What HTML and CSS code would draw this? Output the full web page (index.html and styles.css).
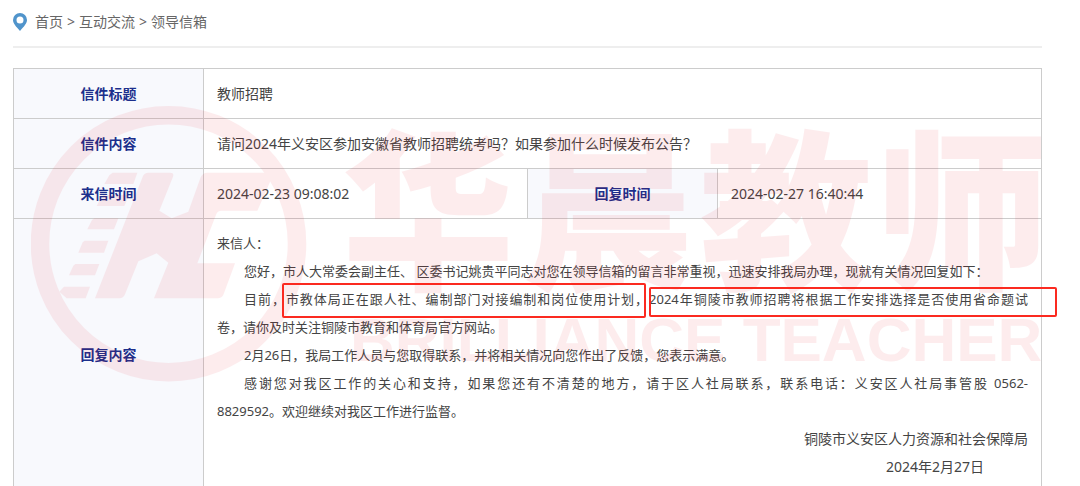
FILE: index.html
```
<!DOCTYPE html>
<html lang="zh-CN">
<head>
  <meta charset="UTF-8">
  <title>领导信箱</title>
  <link rel="stylesheet" href="styles.css">
</head>
<body>
  <nav class="breadcrumb">
    <svg class="pin" viewBox="0 0 14 18" width="14" height="18">
      <path fill="#5094cb" fill-rule="evenodd" d="M7 0a7 7 0 0 1 7 7c0 3.600-3 6.400-7 11C3 13.400 0 10.600 0 7a7 7 0 0 1 7-7zm0 3.500a3.500 3.500 0 1 0 0 7 3.500 3.500 0 0 0 0-7z"/>
    </svg>
    <a href="#">首页</a>
    <span>&gt;</span>
    <a href="#">互动交流</a>
    <span>&gt;</span>
    <a href="#">领导信箱</a>
  </nav>

  <main class="letter">
    <table>
      <colgroup>
        <col class="col-label">
        <col>
        <col class="col-label">
        <col>
      </colgroup>
      <tbody>
        <tr>
          <th scope="row">信件标题</th>
          <td colspan="3">教师招聘</td>
        </tr>
        <tr>
          <th scope="row">信件内容</th>
          <td colspan="3">请问2024年义安区参加安徽省教师招聘统考吗？如果参加什么时候发布公告？</td>
        </tr>
        <tr>
          <th scope="row">来信时间</th>
          <td>2024-02-23 09:08:02</td>
          <th scope="row">回复时间</th>
          <td>2024-02-27 16:40:44</td>
        </tr>
        <tr>
          <th scope="row">回复内容</th>
          <td colspan="3" class="reply">
            <p>来信人：</p>
            <p class="indent">您好，市人大常委会副主任、 区委书记姚贵平同志对您在领导信箱的留言非常重视，迅速安排我局办理，现就有关情况回复如下：</p>
            <p class="indent full">目前，<span class="frame frame-a">市教体局正在跟人社、编制部门对接编制和岗位使用计划，</span><span class="frame frame-b">2024年铜陵市教师招聘将根据工作安排选择是否使用省命题试</span></p>
            <p>卷，请你及时关注铜陵市教育和体育局官方网站。</p>
            <p class="indent">2月26日，我局工作人员与您取得联系，并将相关情况向您作出了反馈，您表示满意。</p>
            <p class="indent full">感谢您对我区工作的关心和支持，如果您还有不清楚的地方，请于区人社局联系，联系电话：义安区人社局事管股 0562-</p>
            <p>8829592。欢迎继续对我区工作进行监督。</p>
            <p class="sign">铜陵市义安区人力资源和社会保障局</p>
            <p class="sign date">2024年2月27日</p>
          </td>
        </tr>
      </tbody>
    </table>

    <!-- Watermark -->
    <svg class="watermark" viewBox="31 104 1012 280" width="1012" height="280" aria-hidden="true">
      <circle cx="168.500" cy="243.700" r="128.500" fill="none" stroke="#e60012" stroke-width="18.500"/>
      <g transform="translate(0 90) scale(.33333)">
        <path d="M446 248h64q13 0 9 12l-41 102 37 23 50-20 37-103q6-14 20-14h200l-50 114H664q-12 0-16 12l-56 146h113l-34 92q-5 13-19 13H462l43-107-35-28-55 24-40 99q-5 12-17 12h-73l142-362q4-15 19-15z"/>
        <path d="M338 248h74l-12 34h-87l15-26zM310 315h77l-14 33h-83l14-27zM283 385h72l-13 33h-80l14-28zM254 452h71l-13 36h-77l13-31zM226 522h72l-13 34h-78l13-29zM192 590h78l-13 35h-57l-22-20z"/>
      </g>
      <g class="wm-name">
        <text x="342" y="276">华</text>
        <text x="523" y="276">晨</text>
        <text x="700" y="276">教</text>
        <text x="876" y="276">师</text>
      </g>
      <text class="wm-latin" x="350" y="361">BRILLIANCE TEACHER</text>
    </svg>
  </main>
</body>
</html>
```
FILE: styles.css
```
* {
  box-sizing: border-box;
}
body {
  margin: 0;
  padding: 0 38px 0 13px;
  background: #fff;
  color: #444;
  font-family: "Noto Sans", "Noto Sans CJK SC", sans-serif;
  font-size: 14px;
  line-height: 28px;
}
.breadcrumb {
  display: flex;
  align-items: center;
  gap: 4px;
  height: 48px;
  padding-bottom: 2px;
  border-bottom: 2px solid #eee;
  color: #666;
}
.breadcrumb a {
  color: #666;
  text-decoration: none;
}
.pin {
  margin-right: 4px;
}
.letter {
  position: relative;
  margin-top: 20px;
}
table {
  width: 100%;
  table-layout: fixed;
  border-collapse: collapse;
}
.col-label {
  width: 190px;
}
th, td {
  height: 50px;
  padding: 10px 13px;
  border: 1px solid #ccc;
}
th {
  background-color: #f8f9fd;
  color: #1c2f8c;
  font-weight: bold;
  text-align: center;
}
td {
  text-align: left;
}
.reply {
  font-size: 13px;
}
.reply p {
  margin: 0;
}
.reply .indent {
  padding-left: 27px;
}
.reply .full {
  text-align: justify;
  text-align-last: justify;
}
.reply .sign {
  font-size: 14px;
  text-align: right;
}
.reply .date {
  padding-right: 44px;
}

/* red frames over the key sentences */
.frame {
  position: relative;
}
.frame::after {
  content: "";
  position: absolute;
  z-index: 2;
  border: 2px solid #fb2a20;
  border-radius: 2px;
}
.frame-a::after {
  inset: -7px 3px -10px -4px;
}
.frame-b::after {
  inset: -3px -29px -9px 0;
}

.watermark {
  position: absolute;
  top: 36px;
  left: 18px;
  z-index: 1;
  fill: #e60012;
  opacity: 0.07;
  pointer-events: none;
}
.wm-name {
  font-family: "Noto Sans CJK SC", sans-serif;
  font-size: 172px;
  font-weight: 900;
}
.wm-latin {
  font-family: "Liberation Sans", sans-serif;
  font-size: 62px;
  font-weight: bold;
}
```
